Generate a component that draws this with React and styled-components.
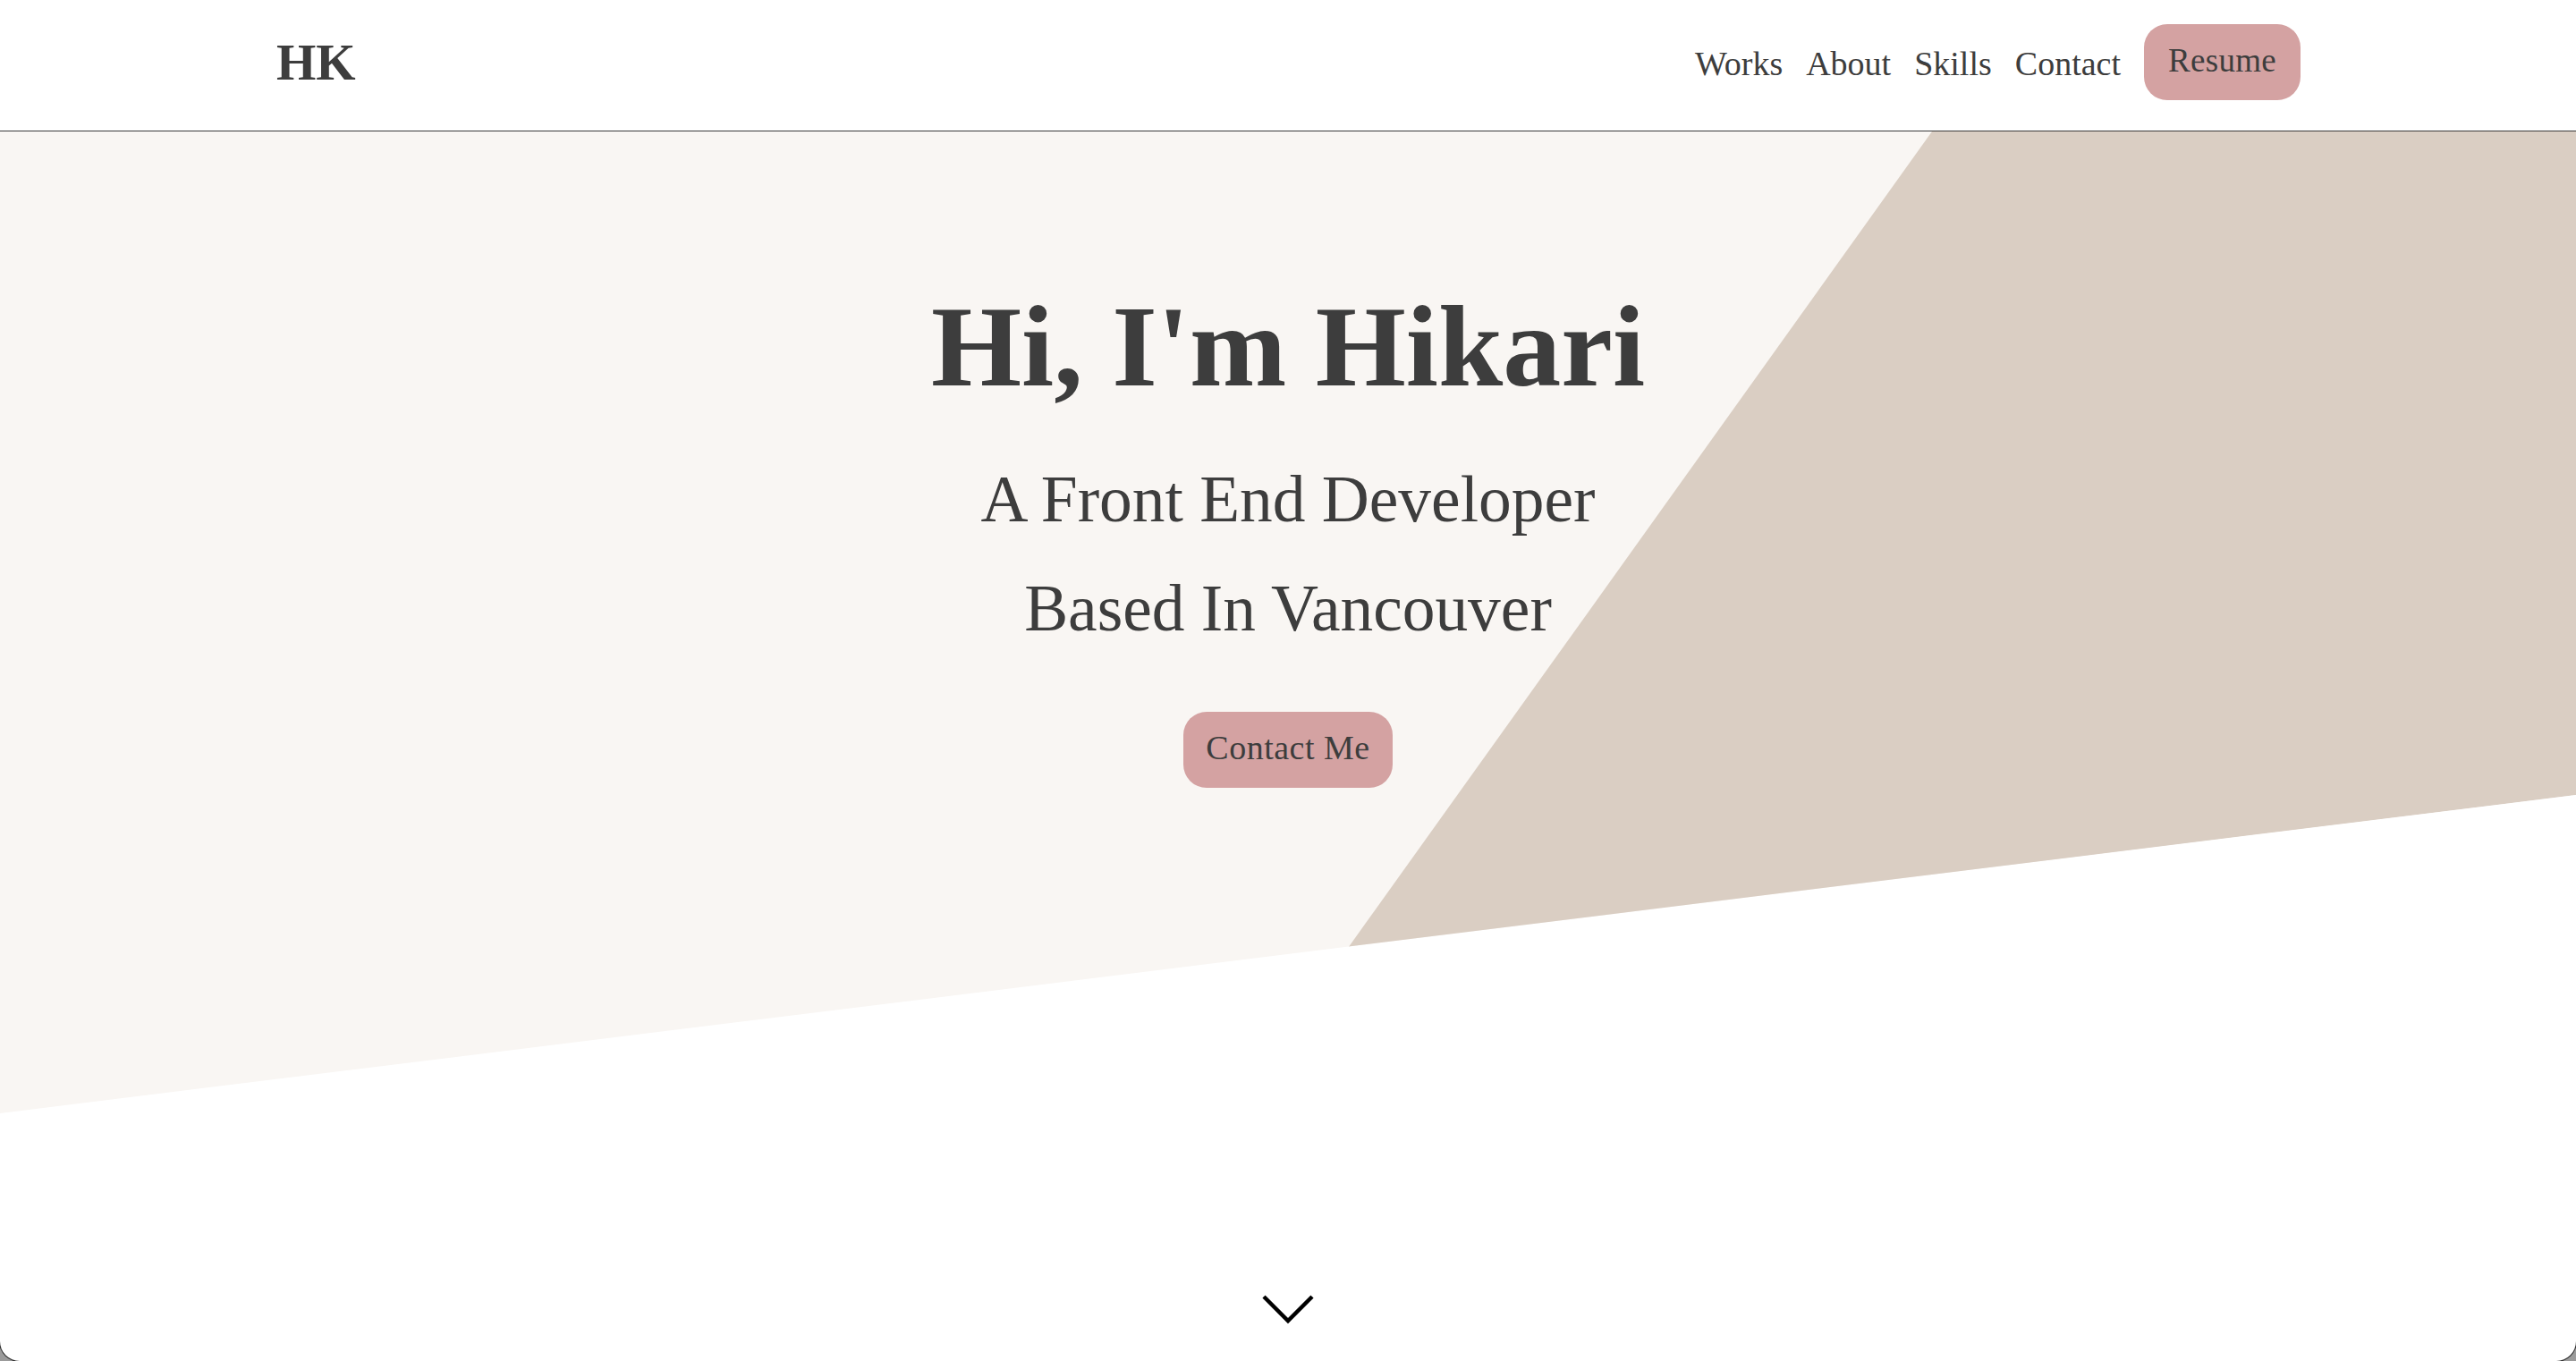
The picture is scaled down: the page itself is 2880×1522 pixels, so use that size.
import React from "react";
import styled, { createGlobalStyle } from "styled-components";

const GlobalStyle = createGlobalStyle`
  * { box-sizing: border-box; }
  html, body { margin: 0; padding: 0; }
  body {
    background: #9b9b9b;
    font-family: "Liberation Serif", "Times New Roman", serif;
    color: #3d3d3d;
  }
`;

const Page = styled.div`
  height: 100vh;
  background: #ffffff;
  border-radius: 0 0 22px 22px;
  overflow: hidden;
  box-shadow: 0 0 0 1px #2a2a2a;
  display: flex;
  flex-direction: column;
`;

const Header = styled.header`
  display: flex;
  align-items: center;
  justify-content: space-between;
  height: 147px;
  flex-shrink: 0;
  padding: 0 308px 7px 309px;
  border-bottom: 1px solid #3a3a3a;
  background: #ffffff;
`;

const Logo = styled.a`
  font-size: 57px;
  line-height: 1;
  font-weight: 700;
  color: #3d3d3d;
  text-decoration: none;
`;

const Nav = styled.nav`
  display: flex;
  align-items: center;
  gap: 26px;
`;

const NavLink = styled.a`
  font-size: 38px;
  line-height: 1;
  color: #3d3d3d;
  text-decoration: none;
  position: relative;
  top: 1px;
`;

const PillButton = styled.a`
  display: inline-block;
  background: #d4a2a2;
  color: #3d3d3d;
  text-decoration: none;
  line-height: 1;
  border-radius: 26px;
  font-size: ${(p) => (p.$size === "lg" ? "38px" : "37px")};
  letter-spacing: ${(p) => (p.$size === "lg" ? "0.5px" : "0.3px")};
  padding: ${(p) => (p.$size === "lg" ? "21px 25px 26px" : "22px 27px 26px")};
`;

const Hero = styled.section`
  position: relative;
  height: 1098px;
  flex-shrink: 0;
  background: #f9f6f3;
  clip-path: polygon(0 0, 100% 0, 100% 742px, 0 100%);
  display: flex;
  flex-direction: column;
  align-items: center;
  padding-top: 175px;

  &::before {
    content: "";
    position: absolute;
    inset: 0;
    background: #dacec3;
    clip-path: polygon(75% 0, 100% 0, 100% 742px, 52.33% 913px);
  }
`;

const HeroContent = styled.div`
  position: relative;
  z-index: 1;
  display: flex;
  flex-direction: column;
  align-items: center;
  text-align: center;
`;

const Title = styled.h1`
  margin: 0;
  font-size: 130px;
  line-height: 1;
  font-weight: 700;
  color: #3d3d3d;
`;

const Tagline = styled.p`
  margin: ${(p) => p.$gap}px 0 0;
  font-size: 73.4px;
  line-height: 1;
  font-weight: 400;
  color: #3d3d3d;
`;

const CtaRow = styled.div`
  margin-top: 78px;
`;

const ScrollHint = styled.div`
  display: flex;
  justify-content: center;
  padding-top: 201px;
`;

const Chevron = () => (
  <svg width="60" height="36" viewBox="0 0 60 36" fill="none">
    <polyline points="3,4 30,31 57,4" stroke="#000" strokeWidth="4.5" />
  </svg>
);

export default function App() {
  return (
    <>
      <GlobalStyle />
      <Page>
        <Header>
          <Logo href="#">HK</Logo>
          <Nav>
            <NavLink href="#">Works</NavLink>
            <NavLink href="#">About</NavLink>
            <NavLink href="#">Skills</NavLink>
            <NavLink href="#">Contact</NavLink>
            <PillButton href="#">Resume</PillButton>
          </Nav>
        </Header>
        <Hero>
          <HeroContent>
            <Title>Hi, I'm Hikari</Title>
            <Tagline $gap={70}>A Front End Developer</Tagline>
            <Tagline $gap={49}>Based In Vancouver</Tagline>
            <CtaRow>
              <PillButton href="#" $size="lg">Contact Me</PillButton>
            </CtaRow>
          </HeroContent>
        </Hero>
        <ScrollHint>
          <Chevron />
        </ScrollHint>
      </Page>
    </>
  );
}
